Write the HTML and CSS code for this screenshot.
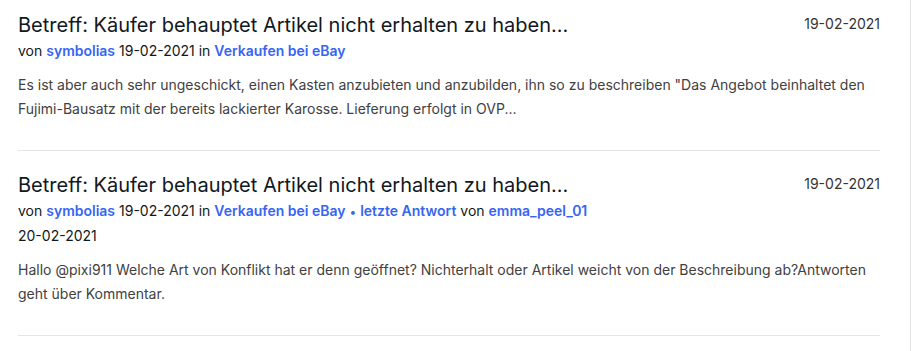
FILE: index.html
```html
<!doctype html>
<html lang="de">

<head>
    <meta charset="UTF-8">
    <title>Suchergebnisse</title>
    <link rel="stylesheet" href="styles.css">
</head>

<body>
    <div class="page">
        <ul class="results">
            <li class="item">
                <div class="item_head">
                    <h3 class="item_title"><a href="#">Betreff: Käufer behauptet Artikel nicht erhalten zu haben...</a></h3>
                    <span class="item_date">19-02-2021</span>
                </div>
                <p class="item_meta">von <a href="#">symbolias</a> 19-02-2021 in <a href="#">Verkaufen bei eBay</a></p>
                <p class="item_text">Es ist aber auch sehr ungeschickt, einen Kasten anzubieten und anzubilden, ihn so zu beschreiben "Das Angebot beinhaltet den Fujimi-Bausatz mit der bereits lackierter Karosse. Lieferung erfolgt in OVP...</p>
            </li>
            <li class="item">
                <div class="item_head">
                    <h3 class="item_title"><a href="#">Betreff: Käufer behauptet Artikel nicht erhalten zu haben...</a></h3>
                    <span class="item_date">19-02-2021</span>
                </div>
                <p class="item_meta">von <a href="#">symbolias</a> 19-02-2021 in <a href="#">Verkaufen bei eBay</a> <span class="dot">&bull;</span> <a href="#">letzte Antwort</a> von <a href="#">emma_peel_01</a><br>20-02-2021</p>
                <p class="item_text">Hallo @pixi911 Welche Art von Konflikt hat er denn geöffnet? Nichterhalt oder Artikel weicht von der Beschreibung ab?Antworten geht über Kommentar.</p>
            </li>
        </ul>
    </div>
</body>

</html>
```

FILE: styles.css
```css
* {
    margin: 0;
    padding: 0;
    box-sizing: border-box;
}

li {
    list-style: none;
}

a {
    text-decoration: none;
    color: #3665f3;
}

body {
    font-family: Inter, "Noto Sans", sans-serif;
    background-color: #fff;
    color: #111820;
}

.page {
    min-height: 100vh;
    border-right: 1px solid #e2e2e2;
    padding: 0 30px 0 18px;
}

.item {
    border-bottom: 1px solid #e5e5e5;
    padding: 11px 0 29px;
}

.item + .item {
    padding-top: 20px;
}

.item_head {
    display: flex;
    justify-content: space-between;
    align-items: flex-start;
}

.item_title {
    font-size: 20px;
    line-height: 28px;
    font-weight: 400;
}

.item_title a {
    color: #111820;
}

.item_date {
    font-size: 14px;
    line-height: 20px;
    color: #333;
    margin-top: 3px;
}

.item_meta {
    font-size: 14px;
    line-height: 24px;
    color: #111820;
}

.item_meta a {
    font-weight: 600;
}

.item_meta .dot {
    font-size: 12px;
    color: #3665f3;
}

.item_text {
    margin-top: 10px;
    font-size: 14px;
    line-height: 24px;
    color: #41413f;
}
```
